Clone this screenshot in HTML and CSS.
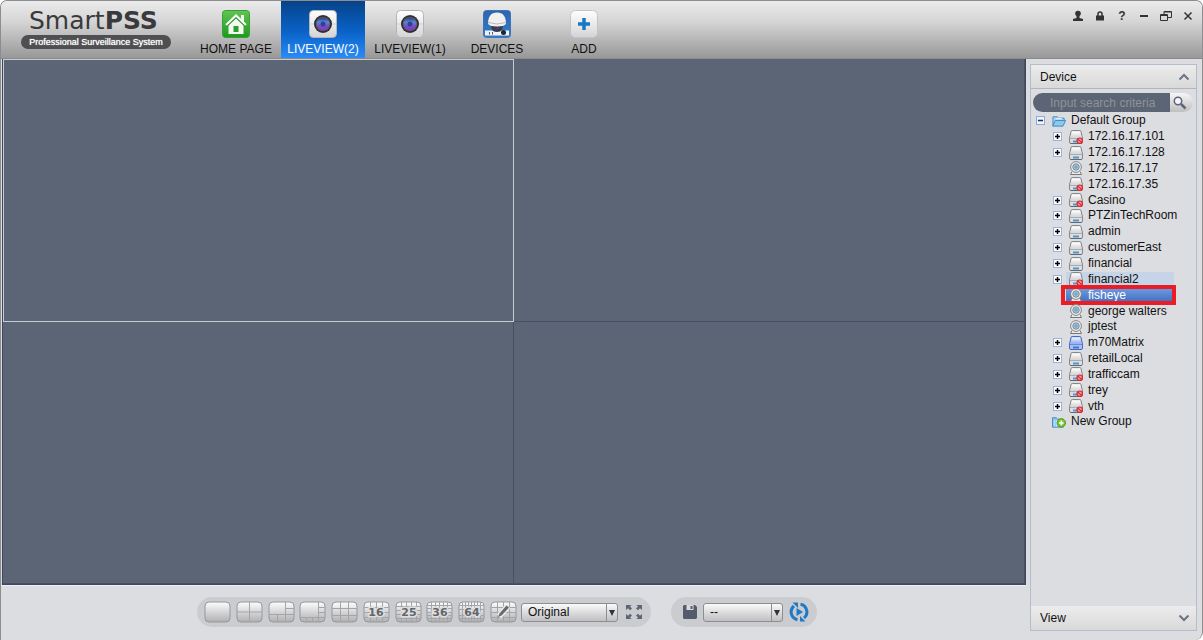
FILE: index.html
```html
<!DOCTYPE html>
<html lang="en">
<head>
    <meta charset="UTF-8">
    <meta name="viewport" content="width=device-width, initial-scale=1.0">
    <title>SmartPSS</title>
    <link rel="stylesheet" href="styles.css">
</head>
<body>
    <!-- shared icons -->
    <svg class="sprite" aria-hidden="true">
        <defs>
            <linearGradient id="g-light" x1="0" y1="0" x2="0" y2="1">
                <stop offset="0" stop-color="#fff"/><stop offset="1" stop-color="#d4d4d6"/>
            </linearGradient>
            <linearGradient id="g-grid" x1="0" y1="0" x2="0" y2="1">
                <stop offset="0" stop-color="#fdfdfd"/><stop offset=".5" stop-color="#d6d6d8"/><stop offset="1" stop-color="#b0b0b2"/>
            </linearGradient>
            <linearGradient id="g-green" x1="0" y1="0" x2="0" y2="1">
                <stop offset="0" stop-color="#5fc653"/><stop offset="1" stop-color="#1c9a1c"/>
            </linearGradient>
            <linearGradient id="g-blue" x1="0" y1="0" x2="0" y2="1">
                <stop offset="0" stop-color="#2c66ae"/><stop offset="1" stop-color="#2f7ccb"/>
            </linearGradient>
            <linearGradient id="g-matrix" x1="0" y1="0" x2="0" y2="1">
                <stop offset="0" stop-color="#f4f7ff"/><stop offset="1" stop-color="#8eaaf0"/>
            </linearGradient>
            <linearGradient id="g-lens" x1="0" y1="0" x2="0" y2="1">
                <stop offset="0" stop-color="#2c3a78"/><stop offset=".35" stop-color="#5a86d0"/><stop offset=".65" stop-color="#7050c8"/><stop offset="1" stop-color="#8a35b8"/>
            </linearGradient>
        </defs>
        <symbol id="i-lens" viewBox="0 0 28 28">
            <rect x=".5" y=".5" width="27" height="27" rx="4" fill="url(#g-light)" stroke="#b4b4b6"/>
            <path d="M1 14h26" stroke="#d0d0d4"/>
            <circle cx="14" cy="14" r="9" fill="#2e2e32"/>
            <circle cx="14" cy="14" r="7.300" fill="#55555c"/>
            <circle cx="14" cy="14" r="6.500" fill="url(#g-lens)"/>
            <circle cx="14" cy="14" r="2.500" fill="#2f3f9a"/>
        </symbol>
        <symbol id="i-device" viewBox="0 0 14 14">
            <path d="M2 1.500Q2.200.5 3.200.5h7.600q1 0 1.200 1L13.500 8v4q0 1.500-1.500 1.500H2Q.5 13.500.5 12V8z" fill="#dcdddf" stroke="#85878a"/>
            <path d="M3 1.500h8l1.400 6H1.600z" fill="url(#g-light)"/>
            <path d="M1 8.500h12" stroke="#aaacaf"/>
            <path d="M1.500 13.500h11" stroke="#66686b"/>
            <path d="M4 11.500h6" stroke="#4a98d4" stroke-width="2"/>
        </symbol>
        <symbol id="i-offline" viewBox="0 0 14 14">
            <use href="#i-device"/>
            <circle cx="10.700" cy="10.700" r="2.700" fill="#f7a0a0" stroke="#d8262e" stroke-width="1.200"/>
            <path d="M8.900 9.300l3.600 2.800" stroke="#d8262e" stroke-width="1.200"/>
        </symbol>
        <symbol id="i-matrix" viewBox="0 0 14 14">
            <path d="M2 1.500Q2.200.5 3.200.5h7.600q1 0 1.200 1L13.500 8v4q0 1.500-1.500 1.500H2Q.5 13.500.5 12V8z" fill="#a9c0f6" stroke="#4b69b8"/>
            <path d="M3 1.500h8l1.400 6H1.600z" fill="url(#g-matrix)"/>
            <path d="M1 8.500h12" stroke="#6c8bd8"/>
            <path d="M4 11.500h6" stroke="#3f78d0" stroke-width="2"/>
        </symbol>
        <symbol id="i-camera" viewBox="0 0 14 14">
            <path d="M3 10.500L1.500 13.500h11L11 10.500" fill="#e9eaec" stroke="#77797c"/>
            <circle cx="7" cy="6" r="5.400" fill="#eceef0" stroke="#838588"/>
            <circle cx="7" cy="6" r="3.200" fill="#cfd5da" stroke="#7b7f84"/>
            <circle cx="7" cy="6" r="2" fill="#62b0e0"/>
        </symbol>
        <symbol id="i-plus" viewBox="0 0 9 9">
            <rect x=".5" y=".5" width="8" height="8" fill="#fff" stroke="#9ab2de"/>
            <path d="M2 4.500h5M4.500 2v5" stroke="#000" stroke-width="1.500"/>
        </symbol>
    </svg>

    <div class="app">
        <header class="header">
            <div class="brand">
                <div class="brand-name">Smart<b>PSS</b></div>
                <div class="brand-tag">Professional Surveillance System</div>
            </div>
            <nav class="tabs">
                <button class="tab">
                    <svg class="tab-icon" viewBox="0 0 28 28">
                        <rect x=".5" y=".5" width="27" height="27" rx="3" fill="url(#g-green)" stroke="#3b9c38"/>
                        <path d="M19 5h3v7l-3-3z" fill="#f4f7f2"/>
                        <path d="M6.500 15v9h15v-9L14 8z" fill="#f4f7f2"/>
                        <path d="M4 16L14 6.500 24 16" fill="none" stroke="#2c9a2a" stroke-width="3"/>
                        <path d="M4 15L14 5.500 24 15" fill="none" stroke="#fff" stroke-width="2"/>
                        <rect x="11.500" y="16" width="5" height="6" fill="#2c9e2a"/>
                    </svg>
                    HOME PAGE
                </button>
                <button class="tab active"><svg class="tab-icon"><use href="#i-lens"/></svg>LIVEVIEW(2)</button>
                <button class="tab"><svg class="tab-icon"><use href="#i-lens"/></svg>LIVEVIEW(1)</button>
                <button class="tab">
                    <svg class="tab-icon" viewBox="0 0 28 28">
                        <rect x=".5" y=".5" width="27" height="27" rx="3" fill="url(#g-blue)" stroke="#3f73b4"/>
                        <path d="M8 15h12q0 7-6 7t-6-7z" fill="#3a3a44"/>
                        <circle cx="14" cy="18" r="2" fill="#4d3868"/>
                        <path d="M5 14Q5 2.500 14 2.500T23 14q-2 2.500-9 2.500T5 14z" fill="#f0f0f0"/>
                        <path d="M5 12.500q9 3 18 0" fill="none" stroke="#b5b9be"/>
                        <path d="M2 20.500h7q5 3 10 0h7v5H2z" fill="#f1f3f6"/>
                        <path d="M6.500 22v2.500M9.500 22v2.500" stroke="#555"/>
                        <circle cx="20.500" cy="22.500" r="2.500" fill="#24242c"/>
                    </svg>
                    DEVICES
                </button>
                <button class="tab">
                    <svg class="tab-icon" viewBox="0 0 28 28">
                        <rect x=".5" y=".5" width="27" height="27" rx="5" fill="url(#g-light)" stroke="#c4c4c6"/>
                        <path d="M8 14h12M14 8v12" stroke="#1878c4" stroke-width="3.500"/>
                    </svg>
                    ADD
                </button>
            </nav>
            <div class="window-buttons">
                <button aria-label="User"><svg width="12" height="12" viewBox="0 0 12 12"><circle cx="6" cy="3.500" r="2.800" fill="#333"/><path d="M4.500 5h3v3l3.500 1v2H1V9l3.500-1z" fill="#333"/></svg></button>
                <button aria-label="Lock"><svg width="12" height="12" viewBox="0 0 12 12"><path d="M4 6V4q0-2 2-2t2 2v2" fill="none" stroke="#333" stroke-width="1.500"/><rect x="2" y="5.500" width="8" height="5" fill="#333"/></svg></button>
                <button aria-label="Help">?</button>
                <button aria-label="Minimize"><svg width="12" height="12" viewBox="0 0 12 12"><path d="M2 6h8" stroke="#333" stroke-width="2"/></svg></button>
                <button aria-label="Restore"><svg width="12" height="12" viewBox="0 0 12 12"><path d="M4 4V1.500h7.500v6H8M4 2h7" fill="none" stroke="#333"/><path d="M.5 4.500h7v6h-7zM.5 5.500h7" fill="none" stroke="#333"/></svg></button>
                <button aria-label="Close"><svg width="12" height="12" viewBox="0 0 12 12"><path d="M2.500 2.500l7 7M9.500 2.500l-7 7" stroke="#333" stroke-width="1.500"/></svg></button>
            </div>
        </header>

        <div class="content">
            <main class="live">
                <div class="video-grid">
                    <div class="video selected"></div>
                    <div class="video"></div>
                    <div class="video"></div>
                    <div class="video"></div>
                </div>

                <div class="toolbar">
                    <div class="tool-group">
                        <div class="layouts">
                            <button aria-label="1 view"><svg viewBox="0 0 27 22"><rect class="cell" x="1" y="1" width="25" height="20" rx="4"/></svg></button>
                            <button aria-label="4 views"><svg viewBox="0 0 27 22"><rect class="cell" x="1" y="1" width="25" height="20" rx="4"/><path class="line" d="M13.500 1v20M1 11h25"/></svg></button>
                            <button aria-label="6 views"><svg viewBox="0 0 27 22"><rect class="cell" x="1" y="1" width="25" height="20" rx="4"/><path class="line" d="M17.500 1v20M1 13.500h25M17.500 7.500H26M9.500 13.500V21"/></svg></button>
                            <button aria-label="8 views"><svg viewBox="0 0 27 22"><rect class="cell" x="1" y="1" width="25" height="20" rx="4"/><path class="line" d="M19.500 1v20M1 16.500h25M19.500 6.500H26M19.500 11.500H26M7.500 16.500V21M13.500 16.500V21"/></svg></button>
                            <button aria-label="9 views"><svg viewBox="0 0 27 22"><rect class="cell" x="1" y="1" width="25" height="20" rx="4"/><path class="line" d="M9.500 1v20M17.500 1v20M1 7.500h25M1 14.500h25"/></svg></button>
                            <button><svg viewBox="0 0 27 22"><rect class="cell" x="1" y="1" width="25" height="20" rx="4"/><path class="line" d="M7.500 1v20M13.500 1v20M19.500 1v20M1 6.500h25M1 11.500h25M1 16.500h25"/><text class="num" x="13" y="15">16</text></svg></button>
                            <button><svg viewBox="0 0 27 22"><rect class="cell" x="1" y="1" width="25" height="20" rx="4"/><path class="line" d="M6.500 1v20M11.500 1v20M16.500 1v20M21.500 1v20M1 5.500h25M1 9.500h25M1 13.500h25M1 17.500h25"/><text class="num" x="14" y="15">25</text></svg></button>
                            <button><svg viewBox="0 0 27 22"><rect class="cell" x="1" y="1" width="25" height="20" rx="4"/><path class="line" d="M5.500 1v20M9.500 1v20M13.500 1v20M17.500 1v20M21.500 1v20M1 4.500h25M1 7.500h25M1 11.500h25M1 14.500h25M1 17.500h25"/><text class="num" x="14" y="15">36</text></svg></button>
                            <button><svg viewBox="0 0 27 22"><rect class="cell" x="1" y="1" width="25" height="20" rx="4"/><path class="line" d="M4.500 1v20M7.500 1v20M10.500 1v20M13.500 1v20M16.500 1v20M19.500 1v20M22.500 1v20M1 4.500h25M1 8.500h25M1 14.500h25M1 17.500h25"/><text class="num" x="14" y="15">64</text></svg></button>
                            <button aria-label="Custom"><svg viewBox="0 0 27 22"><rect class="cell" x="1" y="1" width="25" height="20" rx="4"/><path class="line" d="M7.500 1v20M13.500 1v20M19.500 1v20M1 6.500h25M1 11.500h25M1 16.500h25"/><path d="M9 15.500L18 5" stroke="#e9e9ea" stroke-width="6"/><path d="M8 16l1.500-3.500L16.500 4.500 19 6.500l-7.500 8z" fill="#68696c"/></svg></button>
                        </div>
                        <span class="dropdown">
                            <select class="scale-select" aria-label="Scale">
                                <option>Original</option>
                                <option>Full</option>
                            </select>
                        </span>
                        <button class="tool full-screen" aria-label="Full screen">
                            <svg width="18" height="16" viewBox="0 0 18 16" fill="#5c6475"><path d="M1 1h5.500L5 2.500l2 2L5 6.300l-2-2L1 6zM17 1h-5.500L13 2.500l-2 2 2 1.800 2-2L17 6zM1 15h5.500L5 13.500l2-2-2-1.800-2 2L1 10zM17 15h-5.500l1.500-1.500-2-2 2-1.800 2 2 2-1.700z"/></svg>
                        </button>
                    </div>
                    <div class="tool-group tasks">
                        <button class="tool" aria-label="Save">
                            <svg width="14" height="14" viewBox="0 0 14 14"><path d="M1 0h11l2 2v11l-1 1H1l-1-1V1z" fill="#545b6d"/><path d="M3.500 0h7v5h-7z" fill="#d8dade"/><path d="M7.500 1h2v3h-2z" fill="#545b6d"/></svg>
                        </button>
                        <span class="dropdown">
                            <select class="task-select" aria-label="Task">
                                <option>--</option>
                            </select>
                        </span>
                        <button class="tool" aria-label="Start tour">
                            <svg width="20" height="20" viewBox="0 0 20 20"><path d="M8.500 17.700A7.800 7.800 0 0 1 5 4M11.500 2.300A7.800 7.800 0 0 1 15 16" fill="none" stroke="#1f7ac6" stroke-width="3"/><path d="M3.500.5H9V6zM16.500 19.500H11V14z" fill="#1f7ac6"/><path d="M7.500 6l6.500 4-6.500 4z" fill="#1f7ac6"/></svg>
                        </button>
                    </div>
                </div>
            </main>

            <aside class="sidebar">
                <button class="panel-title device-title">Device
                    <svg width="12" height="8" viewBox="0 0 12 8"><path d="M1.500 6.500L6 2l4.500 4.500" fill="none" stroke="#6b7485" stroke-width="2"/></svg>
                </button>
                <form class="search">
                    <input type="text" placeholder="Input search criteria" aria-label="Search devices">
                    <button type="button" aria-label="Search"><svg width="14" height="14" viewBox="0 0 14 14"><circle cx="5" cy="5" r="3.700" fill="#f4f6f9" stroke="#5c6475" stroke-width="1.500"/><path d="M8 8l4.500 4.500" stroke="#5c6475" stroke-width="2.500"/></svg></button>
                </form>
                <ul class="tree">
                    <li class="group">
                        <svg class="toggle" viewBox="0 0 9 9"><rect x=".5" y=".5" width="8" height="8" fill="#eef3ff" stroke="#8fa9dc"/><path d="M2 4.500h5" stroke="#234" stroke-width="1.500"/></svg>
                        <span class="node"><svg class="icon" viewBox="0 0 15 14"><path d="M1 12V2.500h4.500L7 4h6v2" fill="#a9d4f2" stroke="#3f86bd"/><path d="M4.500 4.500h6" stroke="#fff"/><path d="M.7 12.500L3.500 6.500h11l-2.700 6z" fill="#8cc8f0" stroke="#3f86bd"/></svg>Default Group</span>
                    </li>
                    <li><svg class="toggle"><use href="#i-plus"/></svg><span class="node"><svg class="icon"><use href="#i-offline"/></svg>172.16.17.101</span></li>
                    <li><svg class="toggle"><use href="#i-plus"/></svg><span class="node"><svg class="icon"><use href="#i-device"/></svg>172.16.17.128</span></li>
                    <li><span class="toggle"></span><span class="node"><svg class="icon"><use href="#i-camera"/></svg>172.16.17.17</span></li>
                    <li><span class="toggle"></span><span class="node"><svg class="icon"><use href="#i-offline"/></svg>172.16.17.35</span></li>
                    <li><svg class="toggle"><use href="#i-plus"/></svg><span class="node"><svg class="icon"><use href="#i-offline"/></svg>Casino</span></li>
                    <li><svg class="toggle"><use href="#i-plus"/></svg><span class="node"><svg class="icon"><use href="#i-device"/></svg>PTZinTechRoom</span></li>
                    <li><svg class="toggle"><use href="#i-plus"/></svg><span class="node"><svg class="icon"><use href="#i-device"/></svg>admin</span></li>
                    <li><svg class="toggle"><use href="#i-plus"/></svg><span class="node"><svg class="icon"><use href="#i-device"/></svg>customerEast</span></li>
                    <li><svg class="toggle"><use href="#i-plus"/></svg><span class="node"><svg class="icon"><use href="#i-device"/></svg>financial</span></li>
                    <li><svg class="toggle"><use href="#i-plus"/></svg><span class="node hover"><svg class="icon"><use href="#i-offline"/></svg>financial2</span></li>
                    <li><span class="toggle"></span><span class="node current"><svg class="icon"><use href="#i-camera"/></svg>fisheye</span></li>
                    <li><span class="toggle"></span><span class="node"><svg class="icon"><use href="#i-camera"/></svg>george walters</span></li>
                    <li><span class="toggle"></span><span class="node"><svg class="icon"><use href="#i-camera"/></svg>jptest</span></li>
                    <li><svg class="toggle"><use href="#i-plus"/></svg><span class="node"><svg class="icon"><use href="#i-matrix"/></svg>m70Matrix</span></li>
                    <li><svg class="toggle"><use href="#i-plus"/></svg><span class="node"><svg class="icon"><use href="#i-device"/></svg>retailLocal</span></li>
                    <li><svg class="toggle"><use href="#i-plus"/></svg><span class="node"><svg class="icon"><use href="#i-offline"/></svg>trafficcam</span></li>
                    <li><svg class="toggle"><use href="#i-plus"/></svg><span class="node"><svg class="icon"><use href="#i-offline"/></svg>trey</span></li>
                    <li><svg class="toggle"><use href="#i-plus"/></svg><span class="node"><svg class="icon"><use href="#i-offline"/></svg>vth</span></li>
                    <li class="group">
                        <span class="toggle"></span>
                        <span class="node"><svg class="icon" viewBox="0 0 15 14"><path d="M.5 12.500v-10h4L6 4h6v8.500z" fill="#8cc8f0" stroke="#3f86bd"/><path d="M3 5v7M5 5v7" stroke="#cde8f9"/><circle cx="10" cy="8" r="4.500" fill="#7cc52c" stroke="#4c9a12"/><path d="M7.500 8h5M10 5.500v5" stroke="#fff" stroke-width="1.700"/></svg>New Group</span>
                    </li>
                </ul>
                <button class="panel-title view-title">View
                    <svg width="12" height="8" viewBox="0 0 12 8"><path d="M1.500 1.500L6 6l4.500-4.500" fill="none" stroke="#6b7485" stroke-width="2"/></svg>
                </button>
            </aside>
        </div>
    </div>
</body>
</html>
```

FILE: styles.css
```css
* {
    box-sizing: border-box;
}
body {
    margin: 0;
    background: #fff;
    color: #111;
    font-family: "Liberation Sans", Arial, sans-serif;
    font-size: 12px;
}
button,
input,
select {
    font: inherit;
    color: inherit;
    border: none;
    background: none;
    padding: 0;
    margin: 0;
}
button {
    cursor: pointer;
}
svg {
    display: block;
}
.sprite {
    position: absolute;
    width: 0;
    height: 0;
}
.app {
    display: flex;
    flex-direction: column;
    min-height: 100vh;
    background: #dcdde1;
    border: 1px solid #8d8d8f;
    border-bottom: none;
    border-radius: 7px 7px 8px 0;
    overflow: hidden;
}

/* header */
.header {
    display: flex;
    align-items: flex-start;
    height: 58px;
    background: linear-gradient(#ebebeb, #d6d6d6 35%, #989898);
    border-bottom: 1px solid #8a8a8c;
}
.brand {
    width: 193px;
    padding: 6px 0 0 20px;
}
.brand-name {
    padding-left: 8px;
    font-family: "DejaVu Sans", Verdana, sans-serif;
    font-size: 25px;
    line-height: 28px;
    color: #3a3a3c;
}
.brand-tag {
    width: 150px;
    height: 14px;
    border-radius: 7px;
    background: #4f4f51;
    color: #fff;
    font-size: 9px;
    line-height: 14px;
    text-align: center;
    text-shadow: 0 0 1px #fff;
    white-space: nowrap;
}
.tabs {
    display: flex;
    gap: 2px;
    height: 100%;
}
.tab {
    display: flex;
    flex-direction: column;
    align-items: center;
    gap: 4px;
    width: 84px;
    margin-right: 1px;
    padding-top: 9px;
    line-height: 14px;
    white-space: nowrap;
}
.tab.active {
    background: linear-gradient(#064389, #0a63c8 55%, #2a8cf8);
    color: #fff;
}
.tab-icon {
    width: 28px;
    height: 28px;
}
.window-buttons {
    display: flex;
    margin-left: auto;
    padding: 4px 3px 0 0;
}
.window-buttons button {
    display: flex;
    align-items: center;
    justify-content: center;
    width: 22px;
    height: 22px;
    color: #333;
    font-weight: bold;
}

/* content */
.content {
    flex: 1;
    display: flex;
}
.live {
    flex: 1;
    display: flex;
    flex-direction: column;
    padding-left: 1px;
}
.video-grid {
    flex: 1;
    display: grid;
    grid-template-columns: 1fr 1fr;
    grid-template-rows: 1fr 1fr;
    border: 1px solid #3f485d;
    border-top: none;
}
.video {
    background: #5b6575;
    border-right: 1px solid #495064;
    border-bottom: 1px solid #495064;
}
.video.selected {
    border: 1px solid #c9ccd3;
}
.toolbar {
    display: flex;
    gap: 20px;
    height: 55px;
    padding: 11px 0 0 195px;
    border-top: 1px solid #f0f0f3;
}
.tool-group {
    display: flex;
    align-items: center;
    height: 30px;
    padding: 0 8px 0 7px;
    border-radius: 15px;
    background: #cbccd0;
}
.layouts {
    display: flex;
    justify-content: space-between;
    width: 313px;
    margin-right: 4px;
}
.layouts svg {
    width: 27px;
    height: 22px;
}
.cell {
    fill: url(#g-grid);
    stroke: #96979b;
}
.line {
    fill: none;
    stroke: #a4a5a9;
}
.num {
    font-family: "DejaVu Sans", Verdana, sans-serif;
    font-size: 11px;
    font-weight: bold;
    text-anchor: middle;
    fill: #646568;
    stroke: #dededf;
    stroke-width: 3px;
    paint-order: stroke;
}
.dropdown {
    position: relative;
    display: flex;
}
.dropdown::before {
    content: "";
    position: absolute;
    right: 11px;
    top: 1px;
    bottom: 1px;
    border-left: 1px solid #8d8e92;
    pointer-events: none;
}
.dropdown::after {
    content: "";
    position: absolute;
    right: 3px;
    top: 7px;
    border: 3px solid transparent;
    border-top: 6px solid #333;
    pointer-events: none;
}
.dropdown select {
    appearance: none;
    height: 19px;
    padding: 0 14px 0 6px;
    border: 1px solid #8d8e92;
    border-radius: 3px;
    background: linear-gradient(#fafafa, #dcdcde 50%, #c0c0c2);
}
.scale-select {
    width: 97px;
}
.task-select {
    width: 80px;
}
.tool {
    display: flex;
}
.full-screen {
    margin-left: 7px;
}
.tasks {
    gap: 6px;
    padding-left: 12px;
}

/* sidebar */
.sidebar {
    display: flex;
    flex-direction: column;
    width: 167px;
    margin: 5px 5px 9px 4px;
    border: 1px solid #b3bdcc;
}
.panel-title {
    display: flex;
    align-items: center;
    justify-content: space-between;
    height: 24px;
    padding: 0 6px 0 9px;
    background: linear-gradient(#ececec, #d9d9da);
    text-align: left;
}
.device-title {
    border-bottom: 1px solid #b1b5bd;
}
.view-title {
    margin-top: auto;
}
.search {
    display: flex;
    height: 19px;
    margin: 4px 3px 0 2px;
    border-radius: 10px;
    overflow: hidden;
}
.search input {
    flex: 1;
    min-width: 0;
    padding-left: 17px;
    background: #5b6575;
    color: #fff;
}
.search input::placeholder {
    color: #8f9298;
}
.search button {
    display: flex;
    align-items: center;
    width: 23px;
    padding-left: 3px;
    background: linear-gradient(#f6f6f6, #bfbfc1);
}
.tree {
    display: flex;
    flex-direction: column;
    height: 317px;
    margin: 1px 0 0;
    padding: 0;
    list-style: none;
}
.tree li {
    flex: 1;
    display: flex;
    align-items: center;
    gap: 4px;
    padding: 0 22px;
}
.tree .group {
    padding-left: 5px;
}
.toggle {
    flex: none;
    width: 9px;
    height: 9px;
}
.node {
    position: relative;
    flex: 1;
    display: flex;
    align-items: center;
    gap: 5px;
    padding-left: 3px;
    line-height: 15px;
    white-space: nowrap;
}
.icon {
    flex: none;
    width: 14px;
    height: 14px;
}
.node.hover {
    background: #c5d5e7;
}
.node.current {
    background: linear-gradient(#6f9be2, #3f6dbd);
    color: #fff;
}
.node.current::after {
    content: "";
    position: absolute;
    inset: -3px -2px -2px -5px;
    border: 4px solid #ea1c24;
}
```
